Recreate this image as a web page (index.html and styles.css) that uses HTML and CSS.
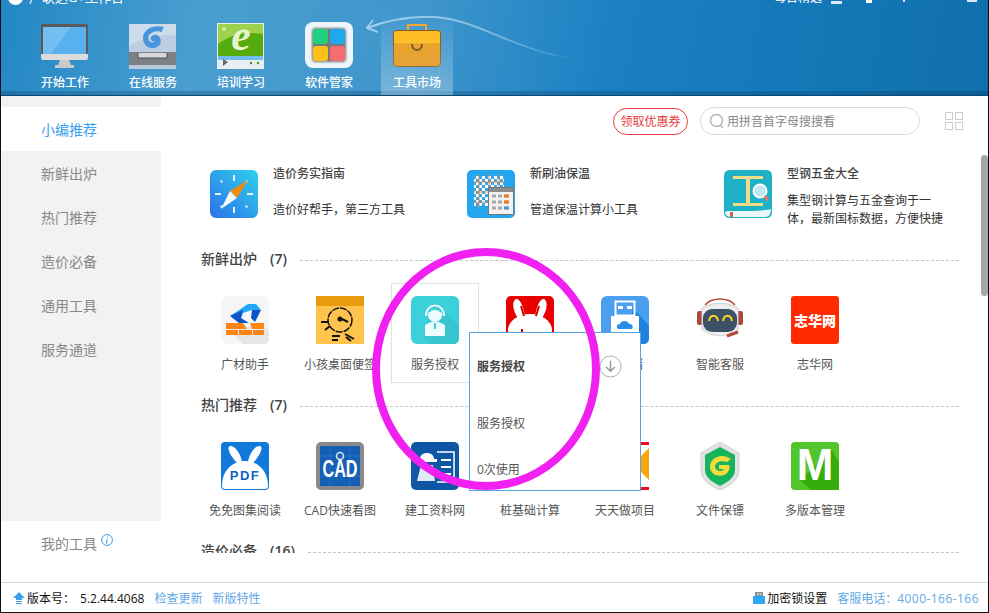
FILE: index.html
```html
<!DOCTYPE html>
<html lang="zh-CN">
<head>
    <meta charset="UTF-8">
    <title>广联达G+工作台</title>
    <link rel="stylesheet" href="styles.css">
</head>
<body>
    <div class="window">
        <header class="header">
            <div class="title-row">
                <span class="logo-dot"></span>
                <span class="app-title">广联达G+工作台</span>
                <span class="daily">每日精选</span>
                <span class="win-mark mark-a"></span>
                <span class="win-mark mark-b"></span>
                <span class="win-mark mark-c"></span>
                <span class="win-mark mark-d"></span>
            </div>
            <svg class="swoosh" viewBox="0 0 220 50">
                <defs>
                    <linearGradient id="swooshFade" gradientUnits="userSpaceOnUse" x1="0" y1="0" x2="212" y2="0">
                        <stop offset="0" stop-color="#b5dcf2" stop-opacity=".85"/>
                        <stop offset=".55" stop-color="#b5dcf2" stop-opacity=".6"/>
                        <stop offset="1" stop-color="#b5dcf2" stop-opacity="0"/>
                    </linearGradient>
                </defs>
                <path d="M1 12C20 5 45 0 68 1C95 3 115 13 135 21C160 31 185 41 210 42" fill="none" stroke="url(#swooshFade)" stroke-width="2"/>
                <path d="M7 4L1 12L12 16" fill="none" stroke="#a9d4ee" stroke-width="2" stroke-opacity=".85"/>
            </svg>
            <nav class="nav">
                <div class="nav-item">
                    <svg class="nav-icon" viewBox="0 0 48 48">
                        <rect x="0" y="2" width="47" height="36" rx="2" fill="#5a5a5c"/>
                        <rect x="2" y="5" width="43" height="27" fill="#58b0ee"/>
                        <path d="M2 5H30L10 32H2Z" fill="#74bff2"/>
                        <path d="M0 32H47V36Q47 38 45 38H2Q0 38 0 36Z" fill="#dcdcdc"/>
                        <path d="M19 38H28L30 43H33V46H14V43H17Z" fill="#c9c9c9"/>
                    </svg>
                    <span>开始工作</span>
                </div>
                <div class="nav-item">
                    <svg class="nav-icon" viewBox="0 0 48 48">
                        <rect x="0" y="2" width="47" height="30" rx="1" fill="#bccfe2"/>
                        <path d="M0 2H47V14Q24 10 0 24Z" fill="#cddcea"/>
                        <path d="M35 5C25 2 14 7 14 16C14 23 20 27 25 26C31 25 33 20 31 16C29 12 24 12 22 15C21 18 24 20 26 19C24 22 19 20 19 16C20 10 28 8 33 10C33 8 34 6 35 5Z" fill="#4a94de"/>
                        <rect x="0" y="30" width="47" height="17" fill="#7d8084"/>
                        <rect x="0" y="43" width="47" height="4" fill="#b9c9da"/>
                        <path d="M9 31V36H38V31" fill="#d8d8d8" stroke="#4c4f52"/>
                    </svg>
                    <span>在线服务</span>
                </div>
                <div class="nav-item">
                    <svg class="nav-icon" viewBox="0 0 48 48">
                        <rect x="0" y="1" width="47" height="46" fill="#e8eef2"/>
                        <rect x="1" y="2" width="45" height="32" fill="#56ab0e"/>
                        <path d="M1 2H46V12Q20 8 1 22Z" fill="#9ed24e"/>
                        <circle cx="7" cy="7" r="2" fill="#d8f0a8"/>
                        <text class="e-letter" x="24" y="28">e</text>
                        <rect x="1" y="34" width="45" height="4" fill="#6fbde8"/>
                        <path d="M6 37L11 40L6 44Z" fill="#666"/>
                        <circle cx="34" cy="41" r="1.2" fill="#3a9a10"/>
                        <circle cx="41" cy="41" r="1.2" fill="#3a9a10"/>
                    </svg>
                    <span>培训学习</span>
                </div>
                <div class="nav-item">
                    <svg class="nav-icon" viewBox="0 0 48 48">
                        <defs>
                            <filter id="tileBlur"><feGaussianBlur stdDeviation="1.2"/></filter>
                        </defs>
                        <rect x="0" y="0" width="48" height="46" rx="8" fill="#eef6fc"/>
                        <rect x="7" y="6" width="34" height="34" rx="4" fill="#777" filter="url(#tileBlur)"/>
                        <rect x="8" y="7" width="15" height="15" rx="3" fill="#1fd07e"/>
                        <rect x="25" y="7" width="15" height="15" rx="3" fill="#1ea8ee"/>
                        <rect x="8" y="24" width="15" height="15" rx="3" fill="#fdc018"/>
                        <rect x="25" y="24" width="15" height="15" rx="3" fill="#f76c70"/>
                    </svg>
                    <span>软件管家</span>
                </div>
                <div class="nav-item is-active">
                    <svg class="nav-icon" viewBox="0 0 48 48">
                        <defs>
                            <linearGradient id="caseBody" x1="0" y1="0" x2="0" y2="1">
                                <stop offset="0" stop-color="#f0a410"/>
                                <stop offset="1" stop-color="#dd890b"/>
                            </linearGradient>
                        </defs>
                        <path d="M15 8V3H33V8" fill="none" stroke="#f2a31a" stroke-width="2"/>
                        <rect x="0.5" y="8.5" width="47" height="36" rx="3" fill="url(#caseBody)" stroke="#7a4e10"/>
                        <rect x="1" y="9" width="46" height="13" rx="3" fill="#ffb70f"/>
                        <path d="M1 22H47" stroke="#d98a0c"/>
                        <path d="M19 22C19 30 29 30 29 22" fill="none" stroke="#6a4210" stroke-width="2"/>
                    </svg>
                    <span>工具市场</span>
                </div>
            </nav>
        </header>

        <div class="body">
            <aside class="sidebar">
                <ul class="side-nav">
                    <li class="is-current">小编推荐</li>
                    <li>新鲜出炉</li>
                    <li>热门推荐</li>
                    <li>造价必备</li>
                    <li>通用工具</li>
                    <li>服务通道</li>
                </ul>
                <div class="my-tools">
                    我的工具
                    <svg class="info-icon" viewBox="0 0 12 12">
                        <circle cx="6" cy="6" r="5.4" fill="none" stroke="#3c9be8"/>
                        <path d="M6.5 2.6V3.8M6.2 5L5.4 9H6.6" fill="none" stroke="#3c9be8"/>
                    </svg>
                </div>
            </aside>

            <main class="main">
                <div class="toolbar">
                    <button class="coupon-btn">领取优惠券</button>
                    <div class="search-box">
                        <svg class="search-icon" viewBox="0 0 16 16">
                            <circle cx="7.5" cy="7.5" r="6" fill="none" stroke="#b5b5b5" stroke-width="1.5"/>
                            <path d="M11.5 12L14 15" stroke="#b5b5b5" stroke-width="1.5"/>
                        </svg>
                        <span>用拼音首字母搜搜看</span>
                    </div>
                    <div class="view-toggle"><i></i><i></i><i></i><i></i></div>
                </div>

                <div class="content">
                    <div class="featured">
                        <div class="feature">
                            <svg class="app-icon" viewBox="0 0 48 48">
                                <defs>
                                    <linearGradient id="compass" x1="0" y1="1" x2="1" y2="0">
                                        <stop offset="0" stop-color="#2d72ea"/>
                                        <stop offset="1" stop-color="#2fd0ec"/>
                                    </linearGradient>
                                </defs>
                                <rect width="48" height="48" rx="6" fill="url(#compass)"/>
                                <path d="M24 5V11M24 37V43M5 24H11M37 24H43" stroke="#e8f6ff" stroke-width="2"/>
                                <path d="M10.5 10.5L12.5 12.500M35.500 12.500L37.500 10.500M10.500 37.500L12.500 35.500M35.500 35.500L37.500 37.500" stroke="#bfe6ff" stroke-width="2"/>
                                <path d="M38 10L20 21L27 28Z" fill="#ee8a10"/>
                                <path d="M11 39L20 21L27 28Z" fill="#f4f8fb"/>
                            </svg>
                            <div class="feature-text">
                                <h3>造价务实指南</h3>
                                <p>造价好帮手，第三方工具</p>
                            </div>
                        </div>
                        <div class="feature">
                            <svg class="app-icon" viewBox="0 0 48 48">
                                <defs>
                                    <pattern id="mesh" width="6" height="6" patternUnits="userSpaceOnUse">
                                        <rect width="6" height="6" fill="#fff"/>
                                        <rect width="3" height="3" fill="#39a6ea"/>
                                        <rect x="3" y="3" width="3" height="3" fill="#39a6ea"/>
                                    </pattern>
                                </defs>
                                <rect width="48" height="48" rx="5" fill="#24a6ee"/>
                                <rect x="7" y="6" width="30" height="30" fill="url(#mesh)"/>
                                <path d="M6 12H37M6 22H37M6 32H37M12 4V38M22 4V38M32 4V38" stroke="#c58a5a"/>
                                <rect x="21.500" y="17.500" width="25" height="27" fill="#f2f2f2" stroke="#777"/>
                                <rect x="22" y="18" width="24" height="4" fill="#8b8b8b"/>
                                <path d="M25 26H29M31 26H35M37 26H41M25 32H29M31 32H35M37 32H41M25 38H29M31 38H35M37 38H41" stroke="#a9a9a9" stroke-width="3"/>
                                <path d="M37 26H42M37 32H42" stroke="#f07a20" stroke-width="3"/>
                                <path d="M37 38H42" stroke="#4c96dc" stroke-width="3"/>
                            </svg>
                            <div class="feature-text">
                                <h3>新刷油保温</h3>
                                <p>管道保温计算小工具</p>
                            </div>
                        </div>
                        <div class="feature">
                            <svg class="app-icon" viewBox="0 0 48 48">
                                <path d="M0 6Q0 0 6 0H42Q48 0 48 6V42Q48 48 42 48H6Q0 48 0 42Z" fill="#1fb2c6"/>
                                <path d="M1 42Q1 46 6 47H42Q47 46 47 39Q42 41 6 41Q2 41 1 42Z" fill="#e8f8fa"/>
                                <rect x="6" y="42" width="3" height="5" fill="#d8604a"/>
                                <path d="M9 6H39V9H26V33H39V36H9V33H22V9H9Z" fill="#f2dc8a"/>
                                <circle cx="36" cy="21" r="6.500" fill="#bdeaf0" stroke="#fff" stroke-width="2"/>
                                <path d="M40.500 26L44 30" stroke="#ef7a60" stroke-width="3"/>
                            </svg>
                            <div class="feature-text">
                                <h3>型钢五金大全</h3>
                                <p>集型钢计算与五金查询于一<br>体，最新国标数据，方便快捷</p>
                            </div>
                        </div>
                    </div>

                    <section class="group">
                        <div class="group-head"><h2>新鲜出炉</h2><span class="group-count">(7)</span><i class="dash"></i></div>
                        <div class="apps">
                            <div class="app">
                                <svg class="app-icon" viewBox="0 0 48 48">
                                    <rect width="48" height="48" rx="7" fill="#f6f6f6"/>
                                    <path d="M5 30H43L48 35V42Q48 48 42 48H22Z" fill="#e6e6e6"/>
                                    <path d="M27 8H35L40 14H31L22 17L20 22L9 20Z" fill="#22a8f4"/>
                                    <path d="M9 20L22 14L20 22L28 27H18Z" fill="#0b55c8"/>
                                    <path d="M31 14H40L34 26L30 22Z" fill="#0b55c8"/>
                                    <path d="M5 27H22L26 33H5ZM29 27H43V33H31ZM5 34H17V39H5ZM18 34H31V39H18ZM32 34H43V39H32Z" fill="#ff8412"/>
                                </svg>
                                <span>广材助手</span>
                            </div>
                            <div class="app">
                                <svg class="app-icon" viewBox="0 0 48 48">
                                    <rect width="48" height="48" fill="#ffc34e"/>
                                    <rect width="48" height="10" fill="#e89c0c"/>
                                    <circle cx="24" cy="24" r="12" fill="none" stroke="#111" stroke-width="1.500" stroke-dasharray="7 1"/>
                                    <circle cx="24" cy="23" r="2.500" fill="#111"/>
                                    <path d="M26 23L32 26M5 26H12M9 34L14 30M16 40H24M16 44H22M29 38L38 43M30 41L35 45" stroke="#111" stroke-width="2"/>
                                </svg>
                                <span>小孩桌面便签</span>
                            </div>
                            <div class="app is-hover">
                                <svg class="app-icon" viewBox="0 0 48 48">
                                    <rect width="48" height="48" rx="6" fill="#3bd0da"/>
                                    <path d="M24 6L48 30V42Q48 48 42 48H20L12 40Z" fill="#37c5d2"/>
                                    <path d="M15 20C15 6 33 6 33 20" fill="none" stroke="#eefcfd" stroke-width="2"/>
                                    <circle cx="24" cy="19" r="7" fill="#eefcfd"/>
                                    <path d="M18 16C20 12 28 12 30 16" fill="none" stroke="#3bd0da" stroke-width="2"/>
                                    <path d="M14 29L20 26H28L34 29V40H14Z" fill="#eefcfd"/>
                                    <path d="M24 27V33" stroke="#3bd0da" stroke-width="2"/>
                                </svg>
                                <span>服务授权</span>
                            </div>
                            <div class="app">
                                <svg class="app-icon" viewBox="0 0 48 48">
                                    <rect width="48" height="48" rx="5" fill="#e80000"/>
                                    <path d="M12 22C4 10 8 2 11 3C15 4 18 13 19 21ZM36 22C44 10 40 2 37 3C33 4 30 13 29 21Z" fill="#fff"/>
                                    <ellipse cx="24" cy="34" rx="22" ry="16" fill="#fff"/>
                                    <path d="M15 10L18 20M33 10L30 20M16 33V36" stroke="#d00000" stroke-width="2"/>
                                </svg>
                            </div>
                            <div class="app">
                                <svg class="app-icon" viewBox="0 0 48 48">
                                    <rect width="48" height="48" rx="6" fill="#4a9fee"/>
                                    <path d="M32 12L48 30V42Q48 48 42 48H24Z" fill="#1f82e0"/>
                                    <rect x="14.500" y="5.500" width="19" height="14" fill="none" stroke="#fff" stroke-width="2"/>
                                    <path d="M17 10H22V13H17ZM26 10H31V13H26Z" fill="#fff"/>
                                    <path d="M10 20H38V42H10Z" fill="#fff"/>
                                    <path d="M18 33C15 33 15 28 19 28C20 24 27 24 28 28C32 27 33 33 30 33Z" fill="#2a8ee6"/>
                                </svg>
                                <span>云存储</span>
                            </div>
                            <div class="app">
                                <svg class="app-icon" viewBox="0 0 48 48">
                                    <path d="M9 9C16 1 32 1 39 9" fill="none" stroke="#b8443a" stroke-width="1.500"/>
                                    <rect x="1" y="15" width="6" height="14" rx="2" fill="#a8483c"/>
                                    <rect x="41" y="15" width="6" height="14" rx="2" fill="#a8483c"/>
                                    <path d="M6 12Q24 2 42 12V34Q24 46 6 34Z" fill="#eeeeee" stroke="#cfcfcf"/>
                                    <rect x="7" y="13" width="34" height="23" rx="9" fill="#3d5166"/>
                                    <path d="M13 25C14 18 21 18 22 25M27 25C28 18 35 18 36 25" fill="none" stroke="#f6d820" stroke-width="2"/>
                                    <path d="M31 40L42 36" stroke="#b8483c" stroke-width="3"/>
                                </svg>
                                <span>智能客服</span>
                            </div>
                            <div class="app">
                                <svg class="app-icon" viewBox="0 0 48 48">
                                    <rect width="48" height="48" rx="3" fill="#ff2a00"/>
                                    <text class="zh-logo" x="24" y="30">志华网</text>
                                </svg>
                                <span>志华网</span>
                            </div>
                        </div>
                    </section>

                    <section class="group">
                        <div class="group-head"><h2>热门推荐</h2><span class="group-count">(7)</span><i class="dash"></i></div>
                        <div class="apps">
                            <div class="app">
                                <svg class="app-icon" viewBox="0 0 48 48">
                                    <rect width="48" height="48" rx="4" fill="#1179da"/>
                                    <path d="M16 21C6 10 6 3 10 4C16 5 20 14 21 20ZM32 21C42 10 42 3 38 4C32 5 28 14 27 20Z" fill="#fff"/>
                                    <path d="M1 44C1 28 12 19 24 19C36 19 47 28 47 44Q47 47 44 47H4Q1 47 1 44Z" fill="#fff"/>
                                    <text class="pdf-text" x="24" y="38">PDF</text>
                                </svg>
                                <span>免免图集阅读</span>
                            </div>
                            <div class="app">
                                <svg class="app-icon" viewBox="0 0 48 48">
                                    <rect width="48" height="48" rx="5" fill="#8a8a8a"/>
                                    <rect x="4" y="4" width="40" height="40" fill="#1560b4"/>
                                    <path d="M4 14H44M4 34H44M14 4V44M34 4V44" stroke="#2e78c8" stroke-width=".7"/>
                                    <circle cx="24" cy="14" r="3.500" fill="none" stroke="#dfe8f2" stroke-width="1.500"/>
                                    <text class="cad-text" transform="translate(24 35) scale(.9 1.35)">CAD</text>
                                </svg>
                                <span>CAD快速看图</span>
                            </div>
                            <div class="app">
                                <svg class="app-icon" viewBox="0 0 48 48">
                                    <rect width="48" height="48" rx="5" fill="#0f57a4"/>
                                    <path d="M9 17C9 9 23 9 23 17H26V20H6V17Z" fill="#fff"/>
                                    <path d="M10 23H22L24 39H6Z" fill="#dfe9f4"/>
                                    <path d="M26 10H43V40H26" fill="none" stroke="#fff" stroke-width="1.500"/>
                                    <path d="M30 18H40M30 25H40M30 32H40" stroke="#fff" stroke-width="2"/>
                                </svg>
                                <span>建工资料网</span>
                            </div>
                            <div class="app">
                                <svg class="app-icon" viewBox="0 0 48 48">
                                    <rect width="48" height="48" fill="#f4f4f4"/>
                                </svg>
                                <span>桩基础计算</span>
                            </div>
                            <div class="app">
                                <svg class="app-icon" viewBox="0 0 48 48">
                                    <rect width="48" height="48" fill="#fff"/>
                                    <path d="M0 1.500H48M0 46.500H48" stroke="#f00a1e" stroke-width="3"/>
                                    <path d="M48 6V38L40 30V14Z" fill="#f6a60e"/>
                                </svg>
                                <span>天天做项目</span>
                            </div>
                            <div class="app">
                                <svg class="app-icon" viewBox="0 0 48 48">
                                    <path d="M24 0L43 11V28C43 38 32 45 24 48C16 45 5 38 5 28V11Z" fill="#e2e2e2" stroke="#cfcfcf"/>
                                    <path d="M24 5L39 13V28C39 36 30 41 24 44C18 41 9 36 9 28V13Z" fill="#17b45e"/>
                                    <path d="M31 15C24 12 14 16 14 25C14 33 24 36 30 32C34 29 34 25 33 23H23V27H28C27 30 20 30 19 25C19 20 25 18 31 20L35 17Z" fill="#f2dc3c"/>
                                </svg>
                                <span>文件保镖</span>
                            </div>
                            <div class="app">
                                <svg class="app-icon" viewBox="0 0 48 48">
                                    <rect width="48" height="48" rx="4" fill="#54c42c"/>
                                    <path d="M41 8L48 20V48H20L9 38Z" fill="#35ad0a"/>
                                    <text class="m-letter" x="24" y="38">M</text>
                                </svg>
                                <span>多版本管理</span>
                            </div>
                        </div>
                    </section>

                    <section class="group">
                        <div class="group-head"><h2>造价必备</h2><span class="group-count">(16)</span><i class="dash"></i></div>
                    </section>
                </div>

                <div class="popup">
                    <h4>服务授权</h4>
                    <p class="popup-desc">服务授权</p>
                    <p class="popup-count">0次使用</p>
                    <svg class="popup-down" viewBox="0 0 24 24">
                        <circle cx="12" cy="12" r="11" fill="#fff" stroke="#aaa"/>
                        <path d="M12 6V17M7.500 12.500L12 17L16.500 12.500" fill="none" stroke="#999" stroke-width="1.500"/>
                    </svg>
                </div>
                <div class="scroll-thumb"></div>
            </main>
        </div>

        <footer class="footer">
            <div class="footer-left">
                <svg class="foot-icon" viewBox="0 0 12 12">
                    <path d="M6 0L12 6H9V8H3V6H0ZM3 9H9V10H3ZM3 11H9V12H3Z" fill="#3c9fe8"/>
                </svg>
                <span class="version">版本号：<span class="version-num">5.2.44.4068</span></span>
                <a class="link">检查更新</a>
                <a class="link">新版特性</a>
            </div>
            <div class="footer-right">
                <svg class="foot-icon" viewBox="0 0 12 12">
                    <rect x="2" y="0" width="8" height="5" fill="#8a9099"/>
                    <path d="M4 1.500H5.500V3H4ZM6.500 1.500H8V3H6.500Z" fill="#e8e8e8"/>
                    <rect x="0" y="4" width="12" height="8" fill="#2ea8f2"/>
                </svg>
                <span class="lock">加密锁设置</span>
                <a class="link">客服电话：<span class="phone">4000-166-166</span></a>
            </div>
        </footer>

        <div class="ring"></div>
    </div>
</body>
</html>
```

FILE: styles.css
```css
* {
    margin: 0;
    padding: 0;
    box-sizing: border-box;
}

body {
    background: #fff;
    font-family: "Open Sans", "Noto Sans CJK SC", sans-serif;
    font-size: 12px;
    color: #555;
}

.window {
    position: relative;
    width: 989px;
    height: 613px;
    overflow: hidden;
    display: flex;
    flex-direction: column;
    background: #fff;
    border-left: 1px solid #111;
    border-right: 1px solid #111;
    border-bottom: 1px solid #111;
}

/* top bar */
.header {
    position: relative;
    height: 96px;
    flex: none;
    background: linear-gradient(100deg, #2287c4 0%, #4a9ed0 20%, #3f96cc 42%, #1a80c3 62%, #0f6fab 100%);
    border-bottom: 1px solid #0b4a70;
    color: #fff;
}

.header::after {
    content: "";
    position: absolute;
    left: 0;
    right: 0;
    bottom: 0;
    height: 4px;
    background: rgba(0, 40, 80, 0.22);
}

.title-row {
    height: 5px;
    overflow: hidden;
    position: relative;
    display: flex;
    align-items: flex-end;
    line-height: 16px;
}

.logo-dot {
    flex: none;
    width: 15px;
    height: 15px;
    margin-left: 7px;
    border-radius: 50%;
    background: #fff;
}

.app-title {
    flex: none;
    margin-left: 6px;
    margin-bottom: 0;
    font-size: 13px;
}

.daily {
    flex: none;
    margin-left: 650px;
    margin-bottom: -1px;
}

.win-mark {
    position: absolute;
    bottom: 2px;
    height: 3px;
    background: #dbeaf4;
}

.mark-a { left: 830px; width: 11px; bottom: 1px; height: 3px; }
.mark-b { left: 865px; width: 6px; background: #fff; }
.mark-c { left: 902px; width: 2px; bottom: 3px; height: 2px; }
.mark-d { left: 966px; width: 10px; bottom: 3px; height: 2px; }

.swoosh {
    position: absolute;
    left: 365px;
    top: 16px;
    width: 220px;
    height: 50px;
}

.nav {
    display: flex;
    padding: 16px 0 0 20px;
}

.nav-item {
    position: relative;
    width: 88px;
    height: 74px;
    padding-top: 1px;
    display: flex;
    flex-direction: column;
    align-items: center;
    font-size: 12px;
    font-weight: 500;
    line-height: 16px;
}

.nav-item span {
    position: relative;
    margin-top: 5px;
}

.nav-icon {
    position: relative;
    width: 48px;
    height: 48px;
    flex: none;
}

.nav-item.is-active::before {
    content: "";
    position: absolute;
    left: 8px;
    right: 8px;
    top: -10px;
    bottom: 0;
    background: linear-gradient(rgba(255, 255, 255, 0), rgba(255, 255, 255, 0.12) 40%, rgba(255, 255, 255, 0.3));
    z-index: 1;
}

.e-letter {
    font-family: "Liberation Serif", serif;
    font-size: 44px;
    font-weight: bold;
    font-style: italic;
    fill: #e6f5d0;
    text-anchor: middle;
}

.body {
    flex: 1;
    display: flex;
    min-height: 0;
}

/* left column */
.sidebar {
    width: 160px;
    flex: none;
    font-size: 14px;
    color: #888;
}

.side-nav {
    height: 425px;
    padding-top: 11px;
    list-style: none;
    background: #f2f2f2;
}

.side-nav li {
    height: 44px;
    padding-left: 40px;
    line-height: 46px;
}

.side-nav .is-current {
    background: #fff;
    color: #3aa0f0;
}

.my-tools {
    display: flex;
    padding: 1px 0 0 40px;
    height: 44px;
    line-height: 44px;
    position: relative;
}

.info-icon {
    width: 12px;
    height: 12px;
    margin: 12px 0 0 4px;
}

/* right column */
.main {
    position: relative;
    flex: 1;
    min-width: 0;
}

.toolbar {
    height: 28px;
    margin-top: 11px;
    padding-right: 25px;
    display: flex;
    justify-content: flex-end;
    align-items: center;
}

.coupon-btn {
    width: 75px;
    height: 27px;
    background: #fff;
    border: 1px solid #e8393a;
    border-radius: 14px;
    color: #e8393a;
    font: inherit;
    line-height: 25px;
}

.search-box {
    width: 220px;
    height: 28px;
    margin-left: 12px;
    padding-left: 8px;
    display: flex;
    align-items: center;
    border: 1px solid #dcdcdc;
    border-radius: 14px;
    color: #888;
}

.search-icon {
    width: 16px;
    height: 16px;
    margin-right: 2px;
}

.view-toggle {
    width: 18px;
    margin-left: 25px;
    display: grid;
    grid-template-columns: 8px 8px;
    gap: 2px;
}

.view-toggle i {
    height: 8px;
    border: 1px solid #cdcdcd;
}

.content {
    height: 418px;
    padding: 0 29px 0 40px;
    overflow: hidden;
}

.featured {
    display: grid;
    grid-template-columns: repeat(3, 257px);
    height: 115px;
    margin-left: 9px;
    padding-top: 35px;
}

.feature {
    display: flex;
    gap: 15px;
}

.app-icon {
    width: 48px;
    height: 48px;
    flex: none;
    display: block;
}

.feature-text {
    margin-top: -5px;
    line-height: 18px;
}

.feature-text h3 {
    font-size: 12px;
    font-weight: 500;
    color: #444;
}

.feature-text p {
    height: 54px;
    display: flex;
    align-items: center;
    color: #333;
}

.group-head {
    height: 20px;
    padding-bottom: 2px;
    display: flex;
    align-items: center;
    color: #444;
    line-height: 18px;
}

.group-head h2 {
    font-size: 14px;
    font-weight: 500;
}

.group-count {
    margin-left: 13px;
    font-size: 14px;
    font-weight: 600;
}

.dash {
    flex: 1;
    margin-left: 13px;
    margin-top: 3px;
    border-top: 1px dashed #c4c4c4;
}

.apps {
    display: grid;
    grid-template-columns: repeat(7, 94px);
    column-gap: 1px;
    margin: 26px 0 23px -3px;
}

.app {
    position: relative;
    height: 77px;
    display: flex;
    flex-direction: column;
    align-items: center;
    line-height: 18px;
    white-space: nowrap;
}

.app span {
    margin-top: 12px;
}

.app.is-hover::before {
    content: "";
    position: absolute;
    left: 3px;
    right: 3px;
    top: -13px;
    height: 98px;
    border: 1px solid #e0e0e0;
}

/* popup card over the list */
.popup {
    position: absolute;
    left: 308px;
    top: 236px;
    width: 172px;
    height: 159px;
    padding: 25px 7px 0;
    background: #fff;
    border: 1px solid #5ba3e0;
    line-height: 18px;
}

.popup h4 {
    font-size: 12px;
    font-weight: 700;
    color: #444;
}

.popup-desc {
    margin-top: 39px;
}

.popup-count {
    margin-top: 28px;
}

.popup-down {
    position: absolute;
    left: 129px;
    top: 22px;
    width: 23px;
    height: 23px;
}

.scroll-thumb {
    position: absolute;
    right: 0;
    top: 59px;
    width: 7px;
    height: 141px;
    border-radius: 4px;
    background: #a6a6a6;
}

.footer {
    height: 30px;
    flex: none;
    padding: 0 9px 0 12px;
    display: flex;
    justify-content: space-between;
    align-items: center;
    border-top: 1px solid #d8d8d8;
    color: #111;
}

.footer-left,
.footer-right {
    display: flex;
    align-items: center;
}

.foot-icon {
    width: 12px;
    height: 12px;
    margin-right: 2px;
}

.version-num {
    margin-left: 5px;
}

.link {
    margin-left: 10px;
    color: #5fa8e8;
}

.phone {
    letter-spacing: 0.45px;
}

.zh-logo {
    font-family: "Noto Sans CJK SC", sans-serif;
    font-size: 14px;
    font-weight: 900;
    fill: #fff;
    text-anchor: middle;
}

.pdf-text {
    font-family: "Liberation Sans", sans-serif;
    font-size: 13px;
    font-weight: bold;
    letter-spacing: 1.500px;
    fill: #1060c8;
    text-anchor: middle;
}

.cad-text {
    font-family: "Liberation Sans", sans-serif;
    font-size: 18px;
    font-weight: bold;
    fill: #fff;
    text-anchor: middle;
}

.m-letter {
    font-family: "Liberation Sans", sans-serif;
    font-size: 44px;
    font-weight: bold;
    fill: #fff;
    text-anchor: middle;
}

/* hand-drawn marker round the popup */
.ring {
    position: absolute;
    left: 371px;
    top: 248px;
    width: 228px;
    height: 242px;
    border: 8px solid #f020f0;
    border-radius: 50%;
    pointer-events: none;
}
```
